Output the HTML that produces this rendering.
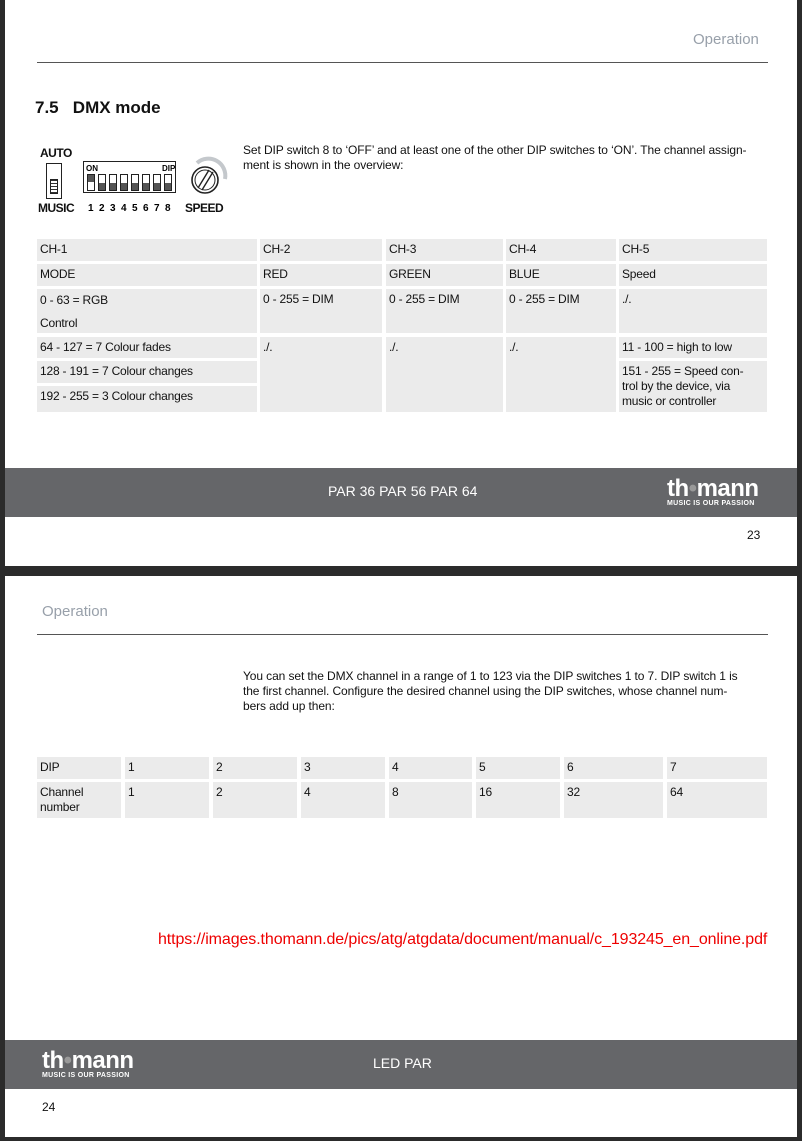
<!DOCTYPE html>
<html><head><meta charset="utf-8"><style>
*{margin:0;padding:0;box-sizing:border-box}
body{width:802px;height:1141px;background:#2b2b2b;position:relative;overflow:hidden;font-family:"Liberation Sans","DejaVu Sans",sans-serif;color:#111}
.pg{position:absolute;left:5px;width:792px;background:#fff}
.a{position:absolute}
.c{position:absolute;background:#ebebeb;font-size:12px;padding:3px 3px;line-height:15px;letter-spacing:-0.2px}
.bar{position:absolute;left:0;width:792px;height:49px;background:#656669;color:#fff;font-size:14px}
.logo{position:absolute;color:#fff;font-weight:bold;font-size:24px;letter-spacing:-0.5px;line-height:20px}
.logo small{display:block;font-size:7px;letter-spacing:0.3px;line-height:9px;font-weight:bold}
.hd{position:absolute;color:#98a0aa;font-size:15px}
.ln{position:absolute;left:32px;width:731px;height:1px;background:#555}
.t{font-size:12px;line-height:15px;letter-spacing:-0.1px}
</style></head><body>
<div class="pg" style="top:0;height:566px">
  <div class="hd" style="left:688px;top:31px">Operation</div>
  <div class="ln" style="top:62px"></div>
  <div class="a" style="left:30px;top:98px;font-size:17px;font-weight:bold">7.5&nbsp;&nbsp;&nbsp;DMX mode</div>
  <div class="a" style="left:35px;top:146px;font-weight:bold;font-size:12px;letter-spacing:-0.5px">AUTO</div>
  <div class="a" style="left:33px;top:201px;font-weight:bold;font-size:12px;letter-spacing:-0.5px">MUSIC</div>
  <div class="a" style="left:41px;top:163px;width:16px;height:36px;border:1px solid #222"><div style="position:absolute;left:3px;top:15px;width:8px;height:15px;background:repeating-linear-gradient(#333 0 1px,#fff 1px 3px);border:1px solid #222"></div></div>
  <svg class="a" style="left:78px;top:161px" width="100" height="56">
    <rect x="0.5" y="0.5" width="92" height="31" fill="none" stroke="#222"/>
    <text x="3" y="10" font-size="8" font-weight="bold" font-family="Liberation Sans">ON</text>
    <text x="79" y="10" font-size="8" font-weight="bold" font-family="Liberation Sans">DIP</text>
    <g fill="none" stroke="#222">
    <rect x="4.5" y="13.5" width="7" height="16"/><rect x="15.5" y="13.5" width="7" height="16"/><rect x="26.5" y="13.5" width="7" height="16"/><rect x="37.5" y="13.5" width="7" height="16"/><rect x="48.5" y="13.5" width="7" height="16"/><rect x="59.5" y="13.5" width="7" height="16"/><rect x="70.5" y="13.5" width="7" height="16"/><rect x="81.5" y="13.5" width="7" height="16"/></g>
    <g fill="#555"><rect x="5" y="14" width="6" height="7"/><rect x="16" y="22" width="6" height="7"/><rect x="27" y="22" width="6" height="7"/><rect x="38" y="22" width="6" height="7"/><rect x="49" y="22" width="6" height="7"/><rect x="60" y="22" width="6" height="7"/><rect x="71" y="22" width="6" height="7"/><rect x="82" y="22" width="6" height="7"/></g>
    <g font-size="10" font-weight="bold" font-family="Liberation Sans"><text x="5" y="50">1</text><text x="16" y="50">2</text><text x="27" y="50">3</text><text x="38" y="50">4</text><text x="49" y="50">5</text><text x="60" y="50">6</text><text x="71" y="50">7</text><text x="82" y="50">8</text></g>
  </svg>
  <svg class="a" style="left:180px;top:155px" width="45" height="45">
    <path d="M12 8 A17 17 0 0 1 40 24" fill="none" stroke="#c4c8cc" stroke-width="4"/>
    <circle cx="20" cy="25" r="13" fill="none" stroke="#222" stroke-width="1.6"/>
    <circle cx="20" cy="25" r="10" fill="none" stroke="#222" stroke-width="1"/>
    <path d="M24 15 L13 33 M28 17 L17 35" stroke="#222" stroke-width="1.4"/>
  </svg>
  <div class="a" style="left:180px;top:201px;font-weight:bold;font-size:12px;letter-spacing:-0.5px">SPEED</div>
  <div class="a t" style="left:238px;top:143px;width:540px;white-space:nowrap">Set DIP switch 8 to ‘OFF’ and at least one of the other DIP switches to ‘ON’. The channel assign-<br>ment is shown in the overview:</div>

  <div class="c" style="left:32px;top:239px;width:220px;height:22px">CH-1</div>
  <div class="c" style="left:255px;top:239px;width:122px;height:22px">CH-2</div>
  <div class="c" style="left:381px;top:239px;width:117px;height:22px">CH-3</div>
  <div class="c" style="left:501px;top:239px;width:110px;height:22px">CH-4</div>
  <div class="c" style="left:614px;top:239px;width:148px;height:22px">CH-5</div>
  <div class="c" style="left:32px;top:264px;width:220px;height:22px">MODE</div>
  <div class="c" style="left:255px;top:264px;width:122px;height:22px">RED</div>
  <div class="c" style="left:381px;top:264px;width:117px;height:22px">GREEN</div>
  <div class="c" style="left:501px;top:264px;width:110px;height:22px">BLUE</div>
  <div class="c" style="left:614px;top:264px;width:148px;height:22px">Speed</div>
  <div class="c" style="left:32px;top:289px;width:220px;height:44px;line-height:23px;padding-top:0">0 - 63 = RGB<br>Control</div>
  <div class="c" style="left:255px;top:289px;width:122px;height:44px">0 - 255 = DIM</div>
  <div class="c" style="left:381px;top:289px;width:117px;height:44px">0 - 255 = DIM</div>
  <div class="c" style="left:501px;top:289px;width:110px;height:44px">0 - 255 = DIM</div>
  <div class="c" style="left:614px;top:289px;width:148px;height:44px">./.</div>
  <div class="c" style="left:32px;top:337px;width:220px;height:21px">64 - 127 = 7 Colour fades</div>
  <div class="c" style="left:32px;top:361px;width:220px;height:22px">128 - 191 = 7 Colour changes</div>
  <div class="c" style="left:32px;top:386px;width:220px;height:26px">192 - 255 = 3 Colour changes</div>
  <div class="c" style="left:255px;top:337px;width:122px;height:75px">./.</div>
  <div class="c" style="left:381px;top:337px;width:117px;height:75px">./.</div>
  <div class="c" style="left:501px;top:337px;width:110px;height:75px">./.</div>
  <div class="c" style="left:614px;top:337px;width:148px;height:21px">11 - 100 = high to low</div>
  <div class="c" style="left:614px;top:361px;width:148px;height:51px;white-space:nowrap">151 - 255 = Speed con-<br>trol by the device, via<br>music or controller</div>

  <div class="bar" style="top:468px"><div class="a" style="left:323px;top:15px">PAR 36 PAR 56 PAR 64</div>
  <div class="logo" style="left:662px;top:11px">th<span style="color:#999">•</span>mann<small>MUSIC IS OUR PASSION</small></div></div>
  <div class="a t" style="left:742px;top:528px">23</div>
</div>
<div class="pg" style="top:576px;height:561px">
  <div class="hd" style="left:37px;top:27px">Operation</div>
  <div class="ln" style="top:58px"></div>
  <div class="a t" style="left:238px;top:93px;width:540px;white-space:nowrap">You can set the DMX channel in a range of 1 to 123 via the DIP switches 1 to 7. DIP switch 1 is<br>the first channel. Configure the desired channel using the DIP switches, whose channel num-<br>bers add up then:</div>
  <div class="c" style="left:32px;top:181px;width:84px;height:22px">DIP</div>
  <div class="c" style="left:120px;top:181px;width:84px;height:22px">1</div>
  <div class="c" style="left:208px;top:181px;width:84px;height:22px">2</div>
  <div class="c" style="left:296px;top:181px;width:84px;height:22px">3</div>
  <div class="c" style="left:384px;top:181px;width:83px;height:22px">4</div>
  <div class="c" style="left:471px;top:181px;width:84px;height:22px">5</div>
  <div class="c" style="left:559px;top:181px;width:99px;height:22px">6</div>
  <div class="c" style="left:662px;top:181px;width:100px;height:22px">7</div>
  <div class="c" style="left:32px;top:206px;width:84px;height:36px">Channel<br>number</div>
  <div class="c" style="left:120px;top:206px;width:84px;height:36px">1</div>
  <div class="c" style="left:208px;top:206px;width:84px;height:36px">2</div>
  <div class="c" style="left:296px;top:206px;width:84px;height:36px">4</div>
  <div class="c" style="left:384px;top:206px;width:83px;height:36px">8</div>
  <div class="c" style="left:471px;top:206px;width:84px;height:36px">16</div>
  <div class="c" style="left:559px;top:206px;width:99px;height:36px">32</div>
  <div class="c" style="left:662px;top:206px;width:100px;height:36px">64</div>
  <div class="a" style="left:153px;top:355px;color:#e00;font-size:16px;letter-spacing:-0.1px;white-space:nowrap">https://images.thomann.de/pics/atg/atgdata/document/manual/c_193245_en_online.pdf</div>
  <div class="bar" style="top:464px"><div class="logo" style="left:37px;top:11px">th<span style="color:#999">•</span>mann<small>MUSIC IS OUR PASSION</small></div>
  <div class="a" style="left:368px;top:15px">LED PAR</div></div>
  <div class="a t" style="left:37px;top:524px">24</div>
</div>
</body></html>
